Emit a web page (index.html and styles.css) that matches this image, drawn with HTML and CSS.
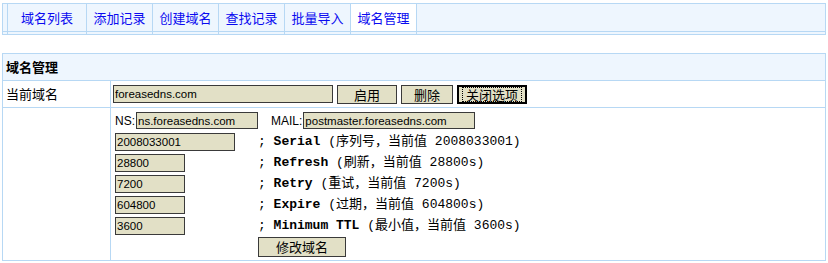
FILE: index.html
```html
<!DOCTYPE html>
<html lang="zh">
<head>
<meta charset="utf-8">
<title>域名管理</title>
<link rel="stylesheet" href="styles.css">
</head>
<body>
<div class="tabbar">
  <div class="cell"></div>
  <a class="cell tab">域名列表</a>
  <a class="cell tab">添加记录</a>
  <a class="cell tab">创建域名</a>
  <a class="cell tab">查找记录</a>
  <a class="cell tab">批量导入</a>
  <a class="cell tab active">域名管理</a>
  <div class="cell"></div>
  <div class="cell"></div><div class="cell"></div><div class="cell"></div><div class="cell"></div>
  <div class="cell"></div><div class="cell"></div><div class="cell"></div><div class="cell"></div>
</div>

<div class="panel">
  <div class="ph">域名管理</div>
  <div class="lab">当前域名</div>
  <div class="val row-domain">
    <input class="inp w-domain" type="text" value="foreasedns.com">
    <button class="btn w-on">启用</button>
    <button class="btn w-del">删除</button>
    <button class="btn btn-focus w-close"><span class="focus">关闭选项</span></button>
  </div>
  <div class="lab"></div>
  <div class="val form">
    <div class="nsline">
      <span class="lbl">NS:</span><input class="inp w-ns" type="text" value="ns.foreasedns.com">
      <span class="lbl mail">MAIL:</span><input class="inp w-mail" type="text" value="postmaster.foreasedns.com">
    </div>
    <div class="f"><input class="inp w-serial" type="text" value="2008033001"></div>
    <div class="d">; <b>Serial</b> (序列号，当前值 2008033001)</div>
    <div class="f"><input class="inp w-num" type="text" value="28800"></div>
    <div class="d">; <b>Refresh</b> (刷新，当前值 28800s)</div>
    <div class="f"><input class="inp w-num" type="text" value="7200"></div>
    <div class="d">; <b>Retry</b> (重试，当前值 7200s)</div>
    <div class="f"><input class="inp w-num" type="text" value="604800"></div>
    <div class="d">; <b>Expire</b> (过期，当前值 604800s)</div>
    <div class="f"><input class="inp w-num" type="text" value="3600"></div>
    <div class="d">; <b>Minimum TTL</b> (最小值，当前值 3600s)</div>
    <div class="f"></div>
    <div class="d"><button class="btn w-mod">修改域名</button></div>
  </div>
</div>
</body>
</html>
```
FILE: styles.css
```css
* { box-sizing: border-box; }
html, body { margin: 0; padding: 0; background: #fff; }
body {
  font-family: "Noto Sans CJK SC", "Liberation Sans", sans-serif;
  font-size: 13px;
  color: #000;
  padding: 3px 0 0 2px;
  width: 828px;
}

.tabbar {
  display: grid;
  width: 824px;
  grid-template-columns: 4px 78px 65px 65px 65px 65px 65px 408px;
  grid-template-rows: 27px 2px;
  gap: 1px;
  border: 1px solid #b7d8f4;
  background: #b7d8f4;
}
.cell {
  background: #eef6fe;
  display: flex;
  align-items: center;
  justify-content: center;
}
.tab {
  color: #0a0af0;
  text-decoration: none;
  line-height: 14px;
  padding-top: 1px;
}
.tab.active { background: #fff; }

.panel {
  margin-top: 18px;
  width: 824px;
  display: grid;
  grid-template-columns: 107px 714px;
  grid-template-rows: 26px 26px 152px;
  gap: 1px;
  border: 1px solid #b7d8f4;
  background: #b7d8f4;
}
.ph {
  grid-column: 1 / 3;
  background: #eef6fe;
  font-weight: bold;
  display: flex;
  align-items: center;
  padding-left: 3px;
  line-height: 14px;
}
.lab {
  background: #fff;
  display: flex;
  align-items: center;
  padding-left: 3px;
  line-height: 14px;
}
.val { background: #fff; }

.row-domain {
  display: flex;
  align-items: center;
  gap: 4px;
  padding-left: 2px;
}

.inp {
  font-family: "Liberation Sans", Arial, sans-serif;
  font-size: 11.5px;
  height: 17px;
  border: 1px solid #3a3a3a;
  background: #e2e0c6;
  color: #000;
  padding: 0 1px;
  margin: 0;
  line-height: 15px;
}
.w-domain { width: 220px; height: 18px; }
.w-ns { width: 122px; margin-left: 1px; }
.w-mail { width: 172px; margin-left: 1px; }
.w-serial { width: 120px; height: 18px; }
.w-num { width: 70px; height: 18px; }

.btn {
  font-family: "Noto Sans CJK SC", sans-serif;
  font-size: 13px;
  line-height: 15px;
  height: 19px;
  background: #e2e0c6;
  border: 1px solid #3a3a3a;
  color: #000;
  padding: 0;
  margin: 0;
  display: inline-flex;
  align-items: center;
  justify-content: center;
}
.w-on { width: 60px; }
.w-del { width: 52px; }
.w-close { width: 70px; border: 2px solid #000; }
.btn-focus .focus {
  display: block;
  margin: 0 1px;
  padding: 0 3px;
  border: 1px dotted #000;
  line-height: 13px;
}
.w-mod { width: 88px; height: 20px; }

.form {
  display: grid;
  grid-template-columns: 143px 1fr;
  grid-template-rows: repeat(7, 21px);
  padding: 2px 0 0 4px;
}
.nsline {
  grid-column: 1 / 3;
  display: flex;
  align-items: center;
}
.lbl {
  font-family: "Liberation Sans", Arial, sans-serif;
  font-size: 12px;
  color: #000;
}
.lbl.mail { margin-left: 13px; }
.f, .d {
  display: flex;
  align-items: center;
}
.d {
  font-family: "Liberation Mono", "Noto Sans CJK SC", monospace;
  font-size: 13px;
  white-space: pre;
  line-height: 15px;
}
.d b { font-weight: bold; }
```
